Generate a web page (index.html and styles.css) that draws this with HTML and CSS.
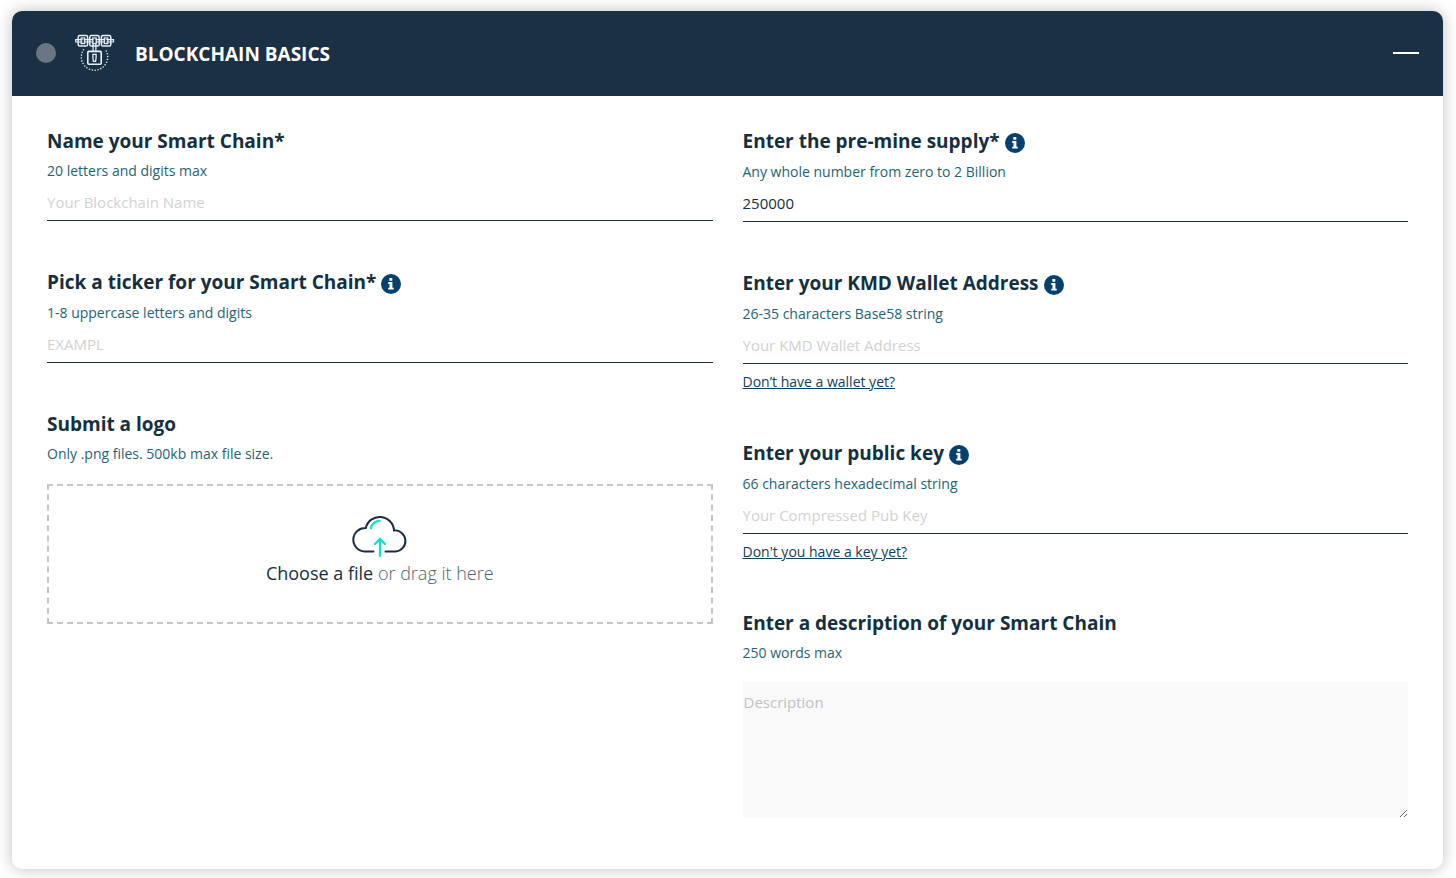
FILE: index.html
```html
<!DOCTYPE html>
<html lang="en">
<head>
<meta charset="utf-8">
<meta name="viewport" content="width=device-width, initial-scale=1">
<title>Blockchain Basics</title>
<link rel="stylesheet" href="styles.css">
</head>
<body>
<svg class="sprite" aria-hidden="true">
  <symbol id="info" viewBox="0 0 20 20">
    <circle cx="10" cy="10" r="10" fill="#06416d"/>
    <path fill="#fff" d="M8.3 3.9h3v2.8h-3zM7.2 8.1h4.2v5.6h1.3v1.8H7.2v-1.8h1.3V9.9H7.2z"/>
  </symbol>
</svg>
<main class="card">
  <header class="card-header">
    <span class="status"></span>
    <svg class="chain-icon" viewBox="0 0 40 38" fill="none" stroke="#e8f1f8" aria-hidden="true">
      <g stroke-width="1.5">
        <rect x="3.2" y="1.6" width="9.4" height="10.4" rx="1.6"/>
        <rect x="14.8" y="1.6" width="9.4" height="10.4" rx="1.6"/>
        <rect x="26.4" y="1.6" width="9.4" height="10.4" rx="1.6"/>
      </g>
      <g stroke-width="1.2">
        <rect x="6.1" y="4" width="3.6" height="5.6"/>
        <rect x="17.7" y="4" width="3.6" height="5.6"/>
        <rect x="29.3" y="4" width="3.6" height="5.6"/>
        <path d="M7.7 5.6H.7v2.4h7M8.7 5.6h9.8M8.7 8h9.8M20.5 5.6h9.8M20.5 8h9.8M31.3 5.6h7.2v2.4h-7.2"/>
        <path d="M18.1 9v8.6M20.9 9v8.6"/>
      </g>
      <rect x="12.8" y="17.4" width="13.4" height="12.8" rx="1" stroke-width="1.6"/>
      <path d="M17.9 20.4h3.2v3l-.5 4h-2.2l-.5-4z" stroke-width="1.3"/>
      <path d="M8.5 15.7A13.2 13.2 0 1 0 30.5 15.7" stroke-width="1.6" stroke-linecap="round" stroke-dasharray="0 2.9"/>
    </svg>
    <h1 class="card-title">BLOCKCHAIN BASICS</h1>
    <button class="collapse" type="button" aria-label="Collapse section"></button>
  </header>
  <form class="form">
    <div class="column">
      <div class="field">
        <div class="field-head"><label class="field-title" for="name">Name your Smart Chain*</label></div>
        <p class="hint">20 letters and digits max</p>
        <input class="text-input" id="name" type="text" placeholder="Your Blockchain Name">
      </div>
      <div class="field">
        <div class="field-head has-info"><label class="field-title" for="ticker">Pick a ticker for your Smart Chain*</label><button class="info" type="button" aria-label="About tickers"><svg><use href="#info"/></svg></button></div>
        <p class="hint">1-8 uppercase letters and digits</p>
        <input class="text-input" id="ticker" type="text" placeholder="EXAMPL">
      </div>
      <div class="field">
        <div class="field-head"><label class="field-title" for="logo">Submit a logo</label></div>
        <p class="hint">Only .png files. 500kb max file size.</p>
        <label class="dropzone">
          <input class="file-input" id="logo" type="file" accept=".png">
          <svg class="cloud" viewBox="0 0 56 44" fill="none" stroke-width="2" stroke-linecap="round" aria-hidden="true">
            <path stroke="#1b2c42" d="M21.5 37.6H12.5A11.6 11.6 0 1 1 13.8 14A14.3 14.3 0 0 1 42 16.4A10.6 10.6 0 1 1 43.5 37.6H33.5"/>
            <path stroke="#14e0cc" stroke-width="2.3" d="M19 14.2Q20.5 7.4 27.5 6.8M28 42V26M23 30l5-5 5 5"/>
          </svg>
          <span class="drop-text"><span class="choose">Choose a file</span> or drag it here</span>
        </label>
      </div>
    </div>
    <div class="column">
      <div class="field">
        <div class="field-head has-info"><label class="field-title" for="supply">Enter the pre-mine supply*</label><button class="info" type="button" aria-label="About pre-mine supply"><svg><use href="#info"/></svg></button></div>
        <p class="hint">Any whole number from zero to 2 Billion</p>
        <input class="text-input" id="supply" type="text" value="250000">
      </div>
      <div class="field">
        <div class="field-head has-info"><label class="field-title" for="wallet">Enter your KMD Wallet Address</label><button class="info" type="button" aria-label="About wallet addresses"><svg><use href="#info"/></svg></button></div>
        <p class="hint">26-35 characters Base58 string</p>
        <input class="text-input" id="wallet" type="text" placeholder="Your KMD Wallet Address">
        <a class="help-link" href="#">Don’t have a wallet yet?</a>
      </div>
      <div class="field">
        <div class="field-head has-info"><label class="field-title" for="key">Enter your public key</label><button class="info" type="button" aria-label="About public keys"><svg><use href="#info"/></svg></button></div>
        <p class="hint">66 characters hexadecimal string</p>
        <input class="text-input" id="key" type="text" placeholder="Your Compressed Pub Key">
        <a class="help-link" href="#">Don't you have a key yet?</a>
      </div>
      <div class="field">
        <div class="field-head"><label class="field-title" for="description">Enter a description of your Smart Chain</label></div>
        <p class="hint">250 words max</p>
        <textarea class="description" id="description" placeholder="Description"></textarea>
      </div>
    </div>
  </form>
</main>
</body>
</html>
```
FILE: styles.css
```css
* { box-sizing: border-box; }

body {
  margin: 0;
  padding: 11px 13px 9px 12px;
  background: #fff;
  color: #14303f;
  font-family: "Open Sans", "Noto Sans", sans-serif;
}

.sprite { display: none; }

.card {
  border-radius: 10px;
  background: #fff;
  box-shadow: 0 0 16px rgba(0, 0, 0, 0.25);
}

.card-header {
  display: flex;
  align-items: center;
  height: 85px;
  padding: 0 24px 2px;
  border-radius: 10px 10px 0 0;
  background: #1a3045;
}

.status {
  width: 20px;
  height: 20px;
  border-radius: 50%;
  background: #6a7684;
}

.chain-icon {
  width: 40px;
  height: 38px;
  margin: 0 20px 0 19px;
}

.card-title {
  margin: 0;
  padding-top: 2px;
  color: #fff;
  font-size: 19px;
  font-weight: 700;
  line-height: 24px;
}

.collapse {
  width: 26px;
  height: 24px;
  margin-left: auto;
  padding: 0;
  border: 0;
  background: linear-gradient(#fff, #fff) center / 100% 2px no-repeat;
  cursor: pointer;
}

.form {
  display: grid;
  grid-template-columns: 1fr 1fr;
  gap: 30px;
  padding: 30px 35px 51px;
}

.column {
  display: flex;
  flex-direction: column;
  gap: 46px;
  min-width: 0;
}

.field {
  display: flex;
  flex-direction: column;
}

.field-head {
  display: flex;
  align-items: flex-start;
  gap: 5px;
  min-height: 30px;
}

.has-info { min-height: 31px; }

.field-title {
  font-size: 19px;
  font-weight: 700;
  line-height: 30px;
}

.info {
  width: 20px;
  height: 20px;
  margin-top: 7px;
  padding: 0;
  border: 0;
  background: none;
  cursor: pointer;
}

.info svg {
  display: block;
  width: 20px;
  height: 20px;
}

.hint {
  margin: 0;
  color: #1d6478;
  font-size: 14px;
  line-height: 30px;
}

.text-input {
  width: 100%;
  height: 35px;
  padding: 0 0 2px;
  border: 0;
  border-bottom: 1px solid #1b2c3a;
  background: none;
  color: #14303f;
  font: 15px "Open Sans", "Noto Sans", sans-serif;
  outline: 0;
}

.text-input::placeholder { color: #d2d2d2; }

.help-link {
  align-self: flex-start;
  margin-top: 8px;
  color: #10405f;
  font-size: 14px;
  line-height: 20px;
}

.dropzone {
  position: relative;
  display: flex;
  flex-direction: column;
  align-items: center;
  height: 140px;
  margin-top: 15px;
  padding-top: 28px;
  border: 2px dashed #c6c6c6;
  cursor: pointer;
}

.file-input {
  position: absolute;
  inset: 0;
  opacity: 0;
}

.cloud {
  width: 56px;
  height: 44px;
}

.drop-text {
  color: #4b6570;
  font-size: 18px;
  font-weight: 300;
  line-height: 30px;
}

.choose {
  color: #14303f;
  font-weight: 400;
}

.description {
  width: 100%;
  height: 136px;
  margin-top: 14px;
  padding: 10px 1px;
  border: 0;
  background: #f9f9f9;
  font: 15px "Open Sans", "Noto Sans", sans-serif;
  resize: vertical;
  outline: 0;
}

.description::placeholder { color: #c2c2c2; }

@media (max-width: 760px) {
  .form { grid-template-columns: 1fr; }
}
```
